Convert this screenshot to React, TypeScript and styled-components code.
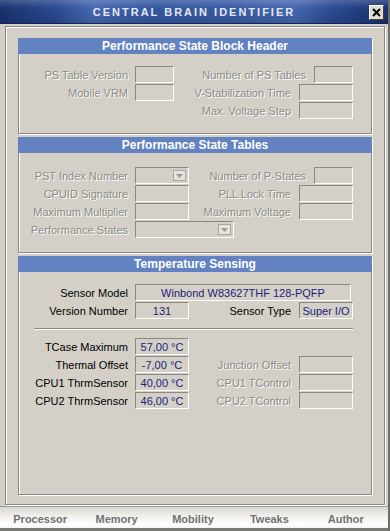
import React from 'react';
import styled, { createGlobalStyle } from 'styled-components';

const GlobalStyle = createGlobalStyle`
  html, body {
    margin: 0;
    padding: 0;
    background: #d4d0c8;
  }
  * { box-sizing: border-box; }
`;

const Window = styled.div`
  width: 390px;
  height: 531px;
  display: flex;
  flex-direction: column;
  background: #d4d0c8;
  font-family: 'Liberation Sans', Arial, sans-serif;
  font-size: 11px;
  border-right: 2px solid #6f6d68;
  overflow: hidden;
`;

const TitleBar = styled.div`
  height: 24px;
  flex: none;
  display: flex;
  align-items: center;
  justify-content: center;
  position: relative;
  background:
    linear-gradient(to bottom, rgba(255,255,255,0.18) 0%, rgba(255,255,255,0) 35%, rgba(0,0,0,0.12) 100%),
    linear-gradient(to right, #1a3370 0%, #2b4a92 14%, #4668b0 24%, #3558a2 40%, #3a5ca6 60%, #4668b0 76%, #2b4a92 86%, #1a3370 100%);
  border-bottom: 1px solid #0f2458;
`;

const Title = styled.span`
  color: #e4e8f2;
  font-weight: bold;
  font-size: 11px;
  letter-spacing: 2px;
`;

const CloseButton = styled.div`
  position: absolute;
  right: 4px;
  top: 5px;
  width: 15px;
  height: 15px;
  background: #dedbd4;
  border: 1px solid;
  border-color: #ffffff #404040 #404040 #ffffff;
  display: flex;
  align-items: center;
  justify-content: center;
`;

const Body = styled.div`
  flex: 1;
  display: flex;
  padding: 2px 3px 1px 5px;
`;

const Frame = styled.div`
  flex: 1;
  min-width: 0;
  display: flex;
  flex-direction: column;
  gap: 3px;
  padding: 11px 12px 9px 12px;
  border: 1px solid #8b8882;
  box-shadow: inset 1px 1px 0 #ffffff, 1px 1px 0 #ffffff;
`;

const Panel = styled.div<{ $grow?: boolean }>`
  display: flex;
  flex-direction: column;
  flex: ${(p) => (p.$grow ? 1 : 'none')};
  border: 1px solid #8b8882;
  box-shadow: inset 1px 1px 0 #ffffff, 1px 1px 0 #ffffff;
`;

const PanelHeader = styled.div`
  height: 16px;
  margin: -1px -1px 0 -1px;
  background: #6282c1;
  color: #ffffff;
  font-weight: bold;
  font-size: 12px;
  display: flex;
  align-items: center;
  justify-content: center;
`;

const PanelBody = styled.div<{ $top: number; $bottom: number }>`
  display: flex;
  flex-direction: column;
  gap: 1px;
  padding: ${(p) => p.$top}px 18px ${(p) => p.$bottom}px 0;
`;

const Row = styled.div`
  display: grid;
  grid-template-columns: 116px auto 1fr;
  align-items: center;
  height: 17px;
`;

const Label = styled.span<{ $off?: boolean }>`
  text-align: right;
  white-space: nowrap;
  color: ${(p) => (p.$off ? '#8e8b85' : '#000000')};
  text-shadow: ${(p) => (p.$off ? '1px 1px 0 #ffffff' : 'none')};
`;

const RowLabel = styled(Label)`
  padding-right: 7px;
`;

const RightGroup = styled.div`
  display: flex;
  justify-content: flex-end;
  align-items: center;
  gap: 8px;
`;

const Field = styled.div<{ $w: number }>`
  width: ${(p) => p.$w}px;
  height: 17px;
  border: 1px solid;
  border-color: #8b8882 #ffffff #ffffff #8b8882;
  color: #1e1c78;
  display: flex;
  align-items: center;
  justify-content: center;
  white-space: nowrap;
  position: relative;
`;

const DropArrow = styled.div`
  position: absolute;
  right: 2px;
  top: 2px;
  width: 13px;
  height: 11px;
  background: #e6e4de;
  border: 1px solid #a9a69f;
  display: flex;
  align-items: center;
  justify-content: center;
`;

const Separator = styled.div`
  height: 2px;
  margin: 8px 0 7px 15px;
  border-top: 1px solid #8b8882;
  border-bottom: 1px solid #ffffff;
`;

const TabBar = styled.div`
  height: 25px;
  flex: none;
  display: grid;
  grid-template-columns: repeat(5, 1fr);
  align-items: center;
  padding: 0 4px 0 2px;
  background: linear-gradient(to bottom, #d8d6d0 0%, #f2f1ee 45%, #ffffff 85%, #f3f3f2 100%);
  border-top: 1px solid #9d9a93;
  border-bottom: 3px solid #7b7a77;
`;

const Tab = styled.span`
  text-align: center;
  font-weight: bold;
  font-size: 11px;
  color: #727272;
  padding-top: 2px;
`;

function Select({ w }: { w: number }) {
  return (
    <Field $w={w}>
      <DropArrow>
        <svg width="7" height="4" viewBox="0 0 7 4">
          <path d="M0 0h7L3.5 4z" fill="#9c9a94" />
        </svg>
      </DropArrow>
    </Field>
  );
}

function Pair({ label, w, off, value }: { label: string; w: number; off?: boolean; value?: string }) {
  return (
    <RightGroup>
      <Label $off={off}>{label}</Label>
      <Field $w={w}>{value}</Field>
    </RightGroup>
  );
}

export default function App() {
  return (
    <>
      <GlobalStyle />
      <Window>
        <TitleBar>
          <Title>CENTRAL BRAIN IDENTIFIER</Title>
          <CloseButton>
            <svg width="9" height="9" viewBox="0 0 9 9">
              <path d="M1 1l7 7M8 1L1 8" stroke="#000" strokeWidth="2" />
            </svg>
          </CloseButton>
        </TitleBar>
        <Body>
          <Frame>
            <Panel>
              <PanelHeader>Performance State Block Header</PanelHeader>
              <PanelBody $top={12} $bottom={14}>
                <Row>
                  <RowLabel $off>PS Table Version</RowLabel>
                  <Field $w={39} />
                  <Pair off label="Number of PS Tables" w={39} />
                </Row>
                <Row>
                  <RowLabel $off>Mobile VRM</RowLabel>
                  <Field $w={39} />
                  <Pair off label="V-Stabilization Time" w={54} />
                </Row>
                <Row>
                  <span />
                  <span />
                  <Pair off label="Max. Voltage Step" w={54} />
                </Row>
              </PanelBody>
            </Panel>

            <Panel>
              <PanelHeader>Performance State Tables</PanelHeader>
              <PanelBody $top={14} $bottom={14}>
                <Row>
                  <RowLabel $off>PST Index Number</RowLabel>
                  <Select w={54} />
                  <Pair off label="Number of P-States" w={39} />
                </Row>
                <Row>
                  <RowLabel $off>CPUID Signature</RowLabel>
                  <Field $w={54} />
                  <Pair off label="PLL Lock Time" w={54} />
                </Row>
                <Row>
                  <RowLabel $off>Maximum Multiplier</RowLabel>
                  <Field $w={54} />
                  <Pair off label="Maximum Voltage" w={54} />
                </Row>
                <Row>
                  <RowLabel $off>Performance States</RowLabel>
                  <Select w={99} />
                  <span />
                </Row>
              </PanelBody>
            </Panel>

            <Panel $grow>
              <PanelHeader>Temperature Sensing</PanelHeader>
              <PanelBody $top={12} $bottom={10}>
                <Row>
                  <RowLabel>Sensor Model</RowLabel>
                  <Field $w={216}>Winbond W83627THF 128-PQFP</Field>
                  <span />
                </Row>
                <Row>
                  <RowLabel>Version Number</RowLabel>
                  <Field $w={54}>131</Field>
                  <Pair label="Sensor Type" w={54} value="Super I/O" />
                </Row>
                <Separator />
                <Row>
                  <RowLabel>TCase Maximum</RowLabel>
                  <Field $w={54}>57,00 °C</Field>
                  <span />
                </Row>
                <Row>
                  <RowLabel>Thermal Offset</RowLabel>
                  <Field $w={54}>-7,00 °C</Field>
                  <Pair off label="Junction Offset" w={54} />
                </Row>
                <Row>
                  <RowLabel>CPU1 ThrmSensor</RowLabel>
                  <Field $w={54}>40,00 °C</Field>
                  <Pair off label="CPU1 TControl" w={54} />
                </Row>
                <Row>
                  <RowLabel>CPU2 ThrmSensor</RowLabel>
                  <Field $w={54}>46,00 °C</Field>
                  <Pair off label="CPU2 TControl" w={54} />
                </Row>
              </PanelBody>
            </Panel>
          </Frame>
        </Body>
        <TabBar>
          <Tab>Processor</Tab>
          <Tab>Memory</Tab>
          <Tab>Mobility</Tab>
          <Tab>Tweaks</Tab>
          <Tab>Author</Tab>
        </TabBar>
      </Window>
    </>
  );
}
